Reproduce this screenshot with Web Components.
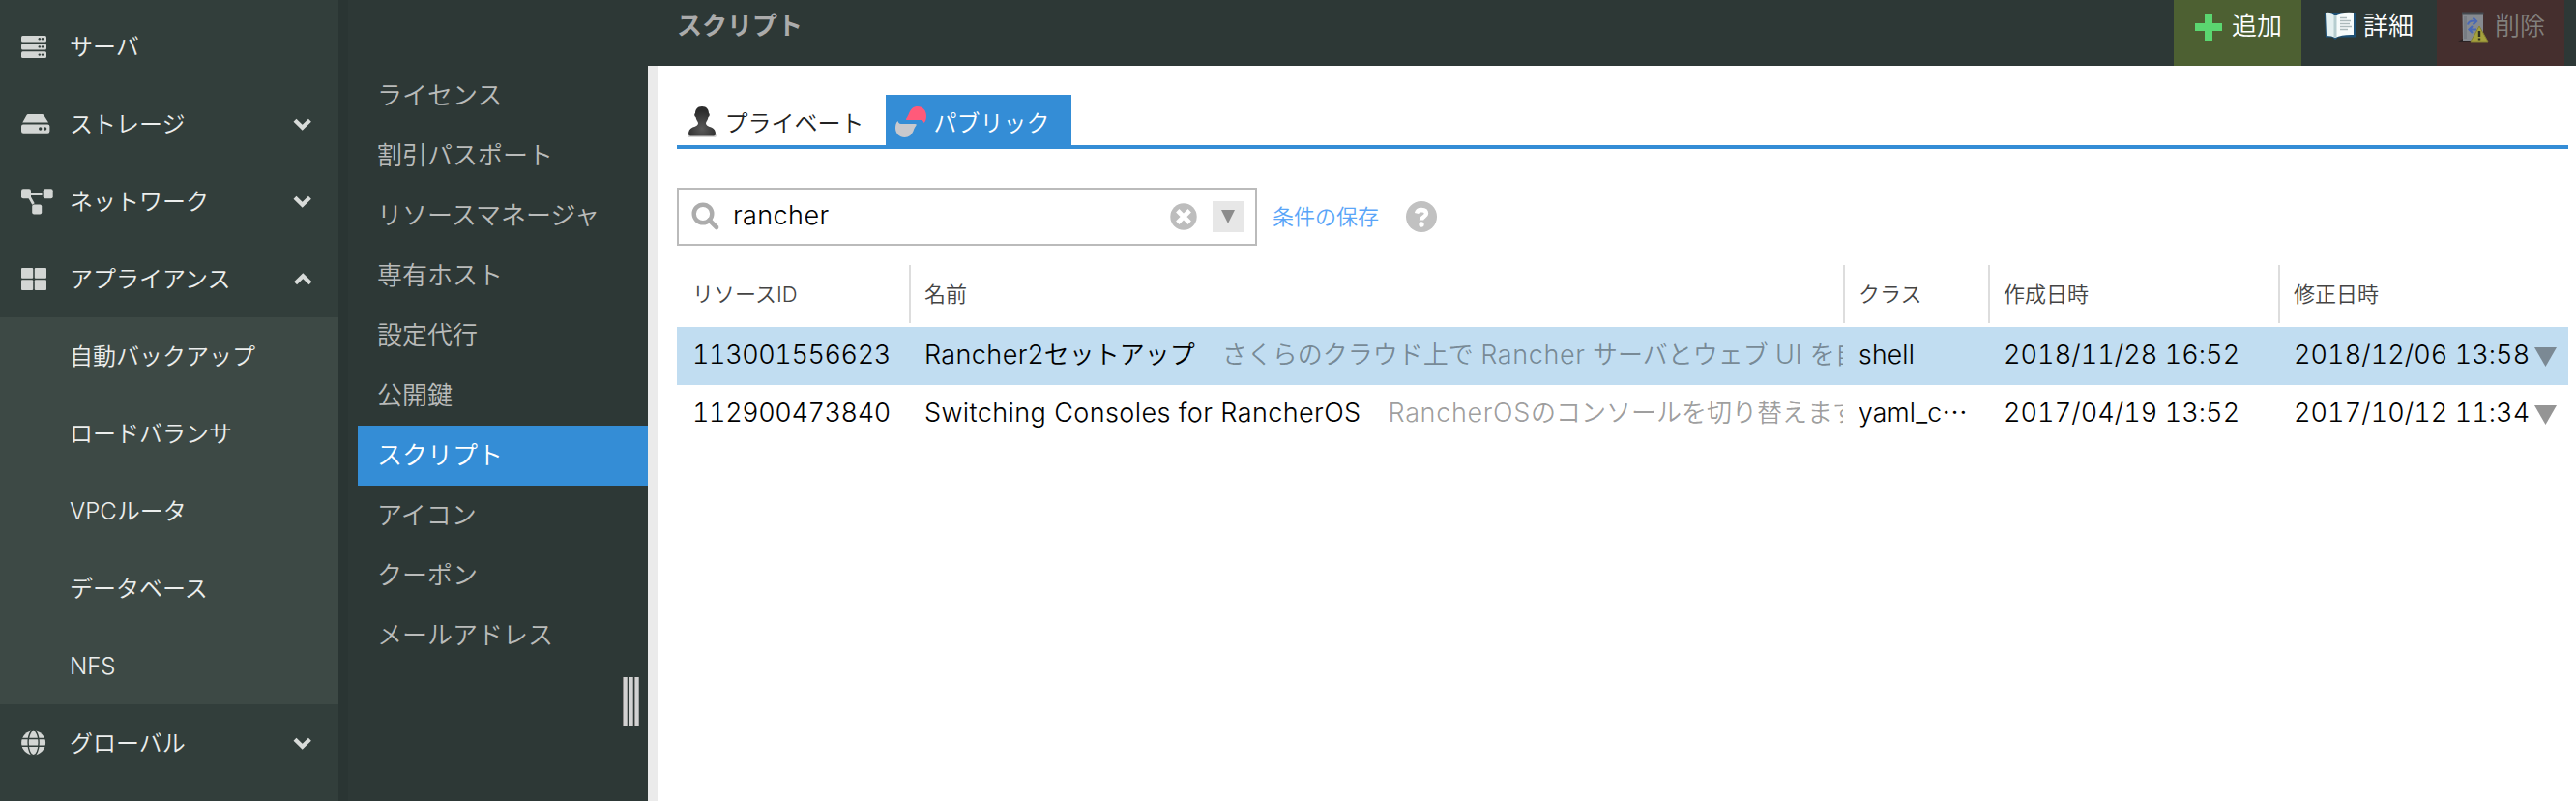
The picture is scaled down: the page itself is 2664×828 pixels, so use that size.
<!DOCTYPE html>
<html lang="ja">
<head>
<meta charset="utf-8">
<title>スクリプト</title>
<style>
html,body{margin:0;height:100%;background:#fff}
body{font-family:Inter,"Noto Sans CJK JP",sans-serif;overflow:hidden}
</style>
</head>
<body>
<cloud-app></cloud-app>
<script>
const define = (name, html, setup) => customElements.define(name, class extends HTMLElement {
  constructor() {
    super();
    this.attachShadow({mode: 'open'}).innerHTML = html;
  }
  connectedCallback() { if (setup) setup.call(this, this.shadowRoot); }
});

const ICONS = {
  server: '<svg width="26" height="23" viewBox="0 0 26 23"><g fill="#d3d6d4"><rect width="26" height="6.6" rx="1.5"/><rect y="8.2" width="26" height="6.4" rx="1.5"/><rect y="16.3" width="26" height="6.6" rx="1.5"/></g><g fill="#323e3b"><circle cx="18.8" cy="3.2" r="1.2"/><circle cx="22" cy="3.2" r="1.2"/><circle cx="18.8" cy="11.4" r="1.2"/><circle cx="22" cy="11.4" r="1.2"/><circle cx="18.8" cy="19.6" r="1.2"/><circle cx="22" cy="19.6" r="1.2"/></g></svg>',
  storage: '<svg width="30" height="20" viewBox="0 0 30 20"><path fill="#d3d6d4" d="M7 0h14.500q1.200 0 1.800 1l4.700 7.600H1.300L5.500 1Q6 0 7 0zM2 10.500h25.400q2 0 2 2V17.500q0 2.200-2.200 2.200H2.200Q0 19.700 0 17.500V12.500q0-2 2-2z"/><g fill="#323e3b"><circle cx="19.700" cy="15" r="1.700"/><circle cx="24.600" cy="15" r="1.700"/></g></svg>',
  network: '<svg width="33" height="27" viewBox="0 0 33 27"><path d="M6 5.500h15.500M8 8l4.500 8" stroke="#d3d6d4" stroke-width="2.800"/><g fill="#d3d6d4"><rect y="0.200" width="10" height="10" rx="2"/><rect x="22.700" y="0.200" width="10" height="10" rx="2"/><rect x="11.200" y="16.500" width="10" height="10" rx="2"/></g></svg>',
  appliance: '<svg width="26" height="23" viewBox="0 0 26 23"><g fill="#d3d6d4"><rect width="12.200" height="10.700" rx="1"/><rect x="13.800" width="12.200" height="10.700" rx="1"/><rect y="12.200" width="12.200" height="10.700" rx="1"/><rect x="13.800" y="12.200" width="12.200" height="10.700" rx="1"/></g></svg>',
  globe: '<svg width="26" height="26" viewBox="0 0 26 26"><circle cx="12.600" cy="12.800" r="12.500" fill="#d3d6d4"/><g fill="none" stroke="#323e3b" stroke-width="1.400"><ellipse cx="12.600" cy="12.800" rx="5.500" ry="13"/><path d="M0 8.500h26M0 16.300h26"/></g></svg>',
  chevron: '<svg width="20" height="13" viewBox="0 0 20 13"><path d="M2 2.200l7.700 7.600 7.700-7.600" fill="none" stroke="#d8dbd9" stroke-width="4.200"/></svg>',
  person: '<svg width="32" height="32" viewBox="0 0 32 32"><defs><radialGradient id="g" cx=".5" cy=".75" r=".6"><stop offset="0" stop-color="#5a5a5a"/><stop offset="1" stop-color="#2c2c2c"/></radialGradient></defs><path fill="#555" opacity=".25" d="M1 30q0 2.500 3 2h24q3 .5 3-2l-2-4H3z"/><path fill="url(#g)" d="M16 0c5 0 7 3.500 7 7 1.300.5 1 3.500-.5 4-.5 3-2 4.500-2.500 6 0 3 3 3.500 6 4.800 3 1.200 4 4.200 4 6.700 0 1.300-1 2-2 2H4c-1 0-2-.7-2-2 0-2.500 1-5.500 4-6.700 3-1.300 6-1.800 6-4.800-.5-1.500-2-3-2.500-6C8 10.500 7.700 7.500 9 7c0-3.500 2-7 7-7z"/></svg>',
  share: '<svg width="32" height="32" viewBox="0 0 32 32"><path fill="#ff5a7a" d="M11 13q1-1.500 2.500-4.500C15.500 2.500 18.500 0 23 0c5.500 0 9 4.500 9 9.500 0 3-.5 6-2.500 7.500-1-2.800-2.300-3-4-3H12q-1.500 0-1-1z"/><path fill="#c9c9cd" d="M2.500 15C3.500 18 5 18 7 18h13.500q2 0 1 1.500-1.500 2-2.500 4.500C17.500 29 14 32 9.500 32 4 32 0 27.500 0 22.500c0-3 .5-6 2.500-7.500z"/></svg>',
  search: '<svg width="30" height="30" viewBox="0 0 30 30"><circle cx="12" cy="12" r="9.300" fill="none" stroke="#acacac" stroke-width="4.400"/><path d="M18.500 18.500l7.500 7.500" stroke="#acacac" stroke-width="4.600" stroke-linecap="round"/></svg>',
  clear: '<svg width="28" height="28" viewBox="0 0 28 28"><circle cx="14" cy="14" r="13.700" fill="#bdbdbd"/><path d="M9.500 9.500l9 9M18.500 9.500l-9 9" stroke="#fff" stroke-width="4.800" stroke-linecap="square"/></svg>',
  help: '<svg width="32" height="32" viewBox="0 0 32 32"><circle cx="16" cy="16" r="16" fill="#c1c1c1"/><path d="M11 12.500q.8-3.500 5-3.500 5 .2 5 3.700c0 3.300-5 3.300-5 6.800" fill="none" stroke="#fff" stroke-width="4.400"/><circle cx="16" cy="24" r="2.700" fill="#fff"/></svg>',
  plus: '<svg width="28" height="28" viewBox="0 0 28 28"><path fill="#5bd670" d="M10 0h8v10h10v8H18v10h-8V18H0v-8h10z"/></svg>',
  book: '<svg width="32" height="30" viewBox="0 0 32 30"><path fill="#1d5075" d="M0 1h32v25.500H14l-3 2.500-3-2.500H1z"/><path fill="#e4f0f1" d="M1 1q6-1 10 3v23q-3.500-2-9-2z"/><path fill="#f7fcfc" d="M11 4q6-4 19-3v23q-12-.5-19 3z"/><path fill="#b6cdd0" d="M9.500 3.500L11 4l1.500-1v23L11 27l-1.500-1z"/><path d="M16 6.500h7M16 9.500h11M16 12.500h10M16 15.500h12M16 18.500h8" stroke="#abb9bb" stroke-width="1.500"/></svg>',
  trash: '<svg width="32" height="32" viewBox="0 0 32 32"><path fill="#2b2223" d="M0 31l5-3h18v3z"/><path fill="#868a90" d="M4.500 2h21.500v28H5z"/><path fill="#454a50" d="M4 .5h22.500v2H4z"/><path fill="#777c83" d="M6 5h3v23H6z"/><path d="M10 13.500q1-4 6-4M15.500 6.500l3.500 3.500-3.500 3.500M19 18.500h-6M15 15l-3.500 3.500L15 22" fill="none" stroke="#4968b5" stroke-width="2.200"/><path fill="#a5a13c" stroke="#858034" d="M22 15L31 31H13z"/><path d="M22 20v6M22 27.500v2" stroke="#303020" stroke-width="2.400"/></svg>'
};

define('ui-icon', '<style>:host{display:flex;flex:none}svg{display:block}</style><span></span>', function (r) {
  r.querySelector('span').innerHTML = ICONS[this.getAttribute('name')];
});

define('nav-item', `<style>
:host{display:flex;align-items:center;height:80px;padding-left:22px;box-sizing:border-box;color:#eceeed;font-size:24px;font-weight:350;line-height:36px}
.icon{width:50px;flex:none;display:flex}
.label{flex:1;white-space:nowrap;padding-top:2px}
.arrow{display:none;margin-right:27px}
:host([arrow]) .arrow{display:block}
:host([arrow=up]) .arrow{transform:rotate(180deg)}
</style><span class="icon"><slot name="icon"></slot></span><span class="label"><slot></slot></span><ui-icon class="arrow" name="chevron"></ui-icon>`);

define('nav-group', `<style>:host{display:block;background:#3d4945}</style><slot></slot>`);

define('side-nav', `<style>
:host{display:block;width:360px;box-sizing:border-box;padding-top:8px;background:#323e3b;border-right:10px solid #2a3533;flex:none;overflow:hidden}
</style>
<nav-item><ui-icon slot="icon" name="server"></ui-icon>サーバ</nav-item>
<nav-item arrow="down"><ui-icon slot="icon" name="storage"></ui-icon>ストレージ</nav-item>
<nav-item arrow="down"><ui-icon slot="icon" name="network"></ui-icon>ネットワーク</nav-item>
<nav-item arrow="up"><ui-icon slot="icon" name="appliance"></ui-icon>アプライアンス</nav-item>
<nav-group><nav-item>自動バックアップ</nav-item><nav-item>ロードバランサ</nav-item><nav-item>VPCルータ</nav-item><nav-item>データベース</nav-item><nav-item>NFS</nav-item></nav-group>
<nav-item arrow="down"><ui-icon slot="icon" name="globe"></ui-icon>グローバル</nav-item>`);

define('menu-item', `<style>
:host{display:flex;align-items:center;height:62px;box-sizing:border-box;padding:0 0 0 20px;color:#b9bbba;font-size:26px;font-weight:350;line-height:38px;white-space:nowrap}
:host([selected]){background:#348dd6;color:#fff}
</style><slot></slot>`);

define('sub-menu', `<style>
:host{display:flex;flex-direction:column;width:310px;padding:68px 0 0 10px;box-sizing:border-box;flex:none}
.grip{display:flex;gap:1px;align-self:flex-end;margin:12px 9px 0 0;height:50px}
.grip i{width:5px;background:#d2d2d2;box-shadow:inset 1px 0 #8f8c8c,inset -1px 0 #a5a5a5}
</style>
<menu-item>ライセンス</menu-item><menu-item>割引パスポート</menu-item><menu-item>リソースマネージャ</menu-item><menu-item>専有ホスト</menu-item><menu-item>設定代行</menu-item><menu-item>公開鍵</menu-item><menu-item selected>スクリプト</menu-item><menu-item>アイコン</menu-item><menu-item>クーポン</menu-item><menu-item>メールアドレス</menu-item>
<div class="grip"><i></i><i></i><i></i></div>`);

define('tool-button', `<style>
:host{display:flex;align-items:flex-start;box-sizing:border-box;height:68px;width:var(--w,132px);padding:var(--pt,12px) 0 0 var(--pl,22px);background:var(--bg,none);color:var(--fg,#fff);font-size:26px;font-weight:350}
span{line-height:28px;white-space:nowrap;margin-left:var(--gap,10px);margin-top:calc(13px - var(--pt,12px))}
</style><slot name="icon"></slot><span><slot></slot></span>`);

define('top-bar', `<style>
:host{display:flex;height:68px;box-sizing:border-box;padding:0 12px 0 30px}
h1{margin:0;flex:1;font-size:26px;line-height:54px;font-weight:700;color:#ababab}
.add{--bg:#4d6032;--pt:14px;--gap:10px}.info{--w:140px;--pl:24px;--gap:8px}.del{--bg:#452f2e;--fg:#82807d;--gap:6px}
</style><h1>スクリプト</h1>
<tool-button class="add"><ui-icon slot="icon" name="plus"></ui-icon>追加</tool-button>
<tool-button class="info"><ui-icon slot="icon" name="book"></ui-icon>詳細</tool-button>
<tool-button class="del"><ui-icon slot="icon" name="trash"></ui-icon>削除</tool-button>`);

define('tab-item', `<style>
:host{display:flex;height:52px;box-sizing:border-box;padding:12px 0 0 10px;width:216px;font-size:24px;font-weight:350;color:#222;line-height:32px;white-space:nowrap}
:host([active]){background:#348dd6;color:#fff;width:192px}
span{margin:1.5px 0 0 7.5px}
</style><slot name="icon"></slot><span><slot></slot></span>`);

define('tab-bar', `<style>:host{display:flex;border-bottom:4px solid #348dd6}</style><slot></slot>`);

define('search-box', `<style>
:host{display:flex;align-items:center;margin-top:40px;height:60px}
.box{display:flex;align-items:center;width:600px;height:60px;box-sizing:border-box;border:2px solid #bbb;padding:0 12px 0 13px}
.text{flex:1;margin-left:13px;font-size:27px;font-weight:350;color:#000;letter-spacing:.4px;line-height:36px;padding-bottom:2px}
.drop{display:flex;align-items:center;justify-content:center;width:32px;height:32px;background:#e7e7e7;margin-left:16px}
a{font-size:22px;font-weight:350;color:#5aa5f8;margin-left:16px;width:138px;line-height:32px}
</style><div class="box"><ui-icon name="search"></ui-icon><span class="text">rancher</span><ui-icon name="clear"></ui-icon><span class="drop"><svg width="14" height="14"><path fill="#8c8c8c" d="M0 0h14L7 14z"/></svg></span></div><a>条件の保存</a><ui-icon name="help"></ui-icon>`);

define('data-row', `<style>
:host{display:grid;grid-template-columns:240px 966px 150px 300px 1fr;height:60px;font-size:26px;font-weight:350;color:#000;line-height:58px}
:host([head]){font-size:22px;color:#444;margin-bottom:4px;line-height:60px}
:host([selected]){background:#c1ddf1}
::slotted(*){box-sizing:border-box;padding-left:16px;white-space:nowrap;overflow:hidden;min-width:0}
:host([head]) ::slotted(:not(:first-child)){border-left:2px solid #ddd;padding-left:14px}
</style><slot></slot>`);

define('script-table', `<style>
:host{display:block;margin-top:20px}
.sub{color:rgba(0,0,0,.4);margin-left:28px}
.id,.date{font-size:27px;font-feature-settings:"tnum"}
.id{letter-spacing:-.4px}
.cls{font-size:26.5px;line-height:57px;letter-spacing:.2px}
.en{font-size:27px;letter-spacing:.4px;line-height:1}
.sub .en{letter-spacing:.65px}
.date{display:flex;letter-spacing:.08px}
.date b{font-weight:inherit;width:249px}
.date svg{margin:21px 0 0 0;flex:none}
</style>
<data-row head><div>リソースID</div><div>名前</div><div>クラス</div><div>作成日時</div><div>修正日時</div></data-row>
<data-row selected><div class="id">113001556623</div><div><span class="en">Rancher2</span>セットアップ<span class="sub">さくらのクラウド上で <span class="en">Rancher</span> サーバとウェブ <span class="en">UI</span> を自</span></div><div class="cls">shell</div><div class="date">2018/11/28 16:52</div><div class="date"><b>2018/12/06 13:58</b><svg width="24" height="20"><path fill="#7b8994" d="M0 0h23L11.500 20z"/></svg></div></data-row>
<data-row><div class="id">112900473840</div><div><span class="en">Switching Consoles for RancherOS</span><span class="sub"><span class="en">RancherOS</span>のコンソールを切り替えます</span></div><div class="cls">yaml_c⋯</div><div class="date">2017/04/19 13:52</div><div class="date"><b>2017/10/12 11:34</b><svg width="24" height="20"><path fill="#959595" d="M0 0h23L11.500 20z"/></svg></div></data-row>`);

define('main-panel', `<style>
:host{display:block;flex:1;background:#fff;border-left:10px solid #ebebeb;padding:30px 8px 0 20px;box-sizing:border-box}
</style>
<tab-bar><tab-item><ui-icon slot="icon" name="person"></ui-icon>プライベート</tab-item><tab-item active><ui-icon slot="icon" name="share"></ui-icon>パブリック</tab-item></tab-bar>
<search-box></search-box><script-table></script-table>`);

define('cloud-app', `<style>
:host{display:flex;width:2664px;height:828px;background:#2d3836;overflow:hidden}
.right{display:flex;flex-direction:column;flex:1;min-width:0}
</style><side-nav></side-nav><sub-menu></sub-menu><div class="right"><top-bar></top-bar><main-panel></main-panel></div>`);
</script>
</body>
</html>
